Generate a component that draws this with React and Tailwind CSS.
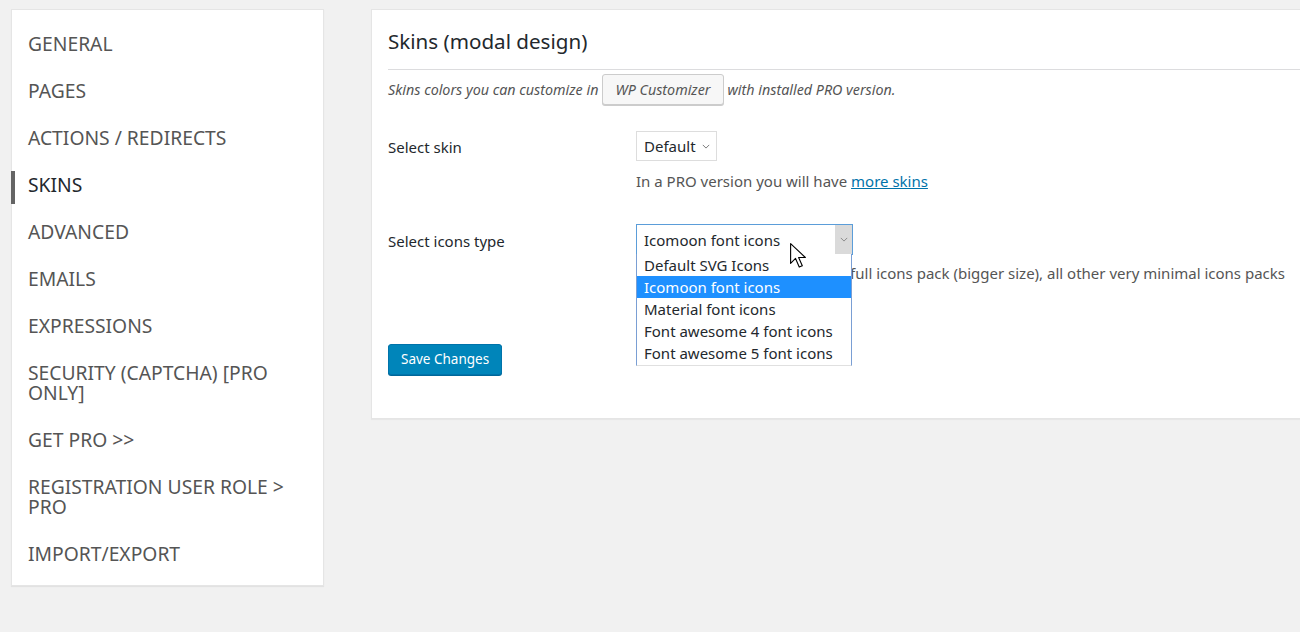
const menu = [
    'GENERAL',
    'PAGES',
    'ACTIONS / REDIRECTS',
    'SKINS',
    'ADVANCED',
    'EMAILS',
    'EXPRESSIONS',
    'SECURITY (CAPTCHA) [PRO ONLY]',
    'GET PRO >>',
    'REGISTRATION USER ROLE > PRO',
    'IMPORT/EXPORT',
]

const iconTypes = [
    'Default SVG Icons',
    'Icomoon font icons',
    'Material font icons',
    'Font awesome 4 font icons',
    'Font awesome 5 font icons',
]

const Chevron = ({ className }) => (
    <svg viewBox="0 0 10 6" className={className} fill="none" stroke="currentColor" strokeWidth="1.2">
        <path d="M1 1l4 4 4-4" />
    </svg>
)

// mouse pointer that sits over the open select in the screenshot
const Cursor = () => (
    <svg viewBox="0 0 13 21" className="absolute left-[153px] top-[18px] w-[16px] h-[26px] z-20">
        <path d="M0.5 0.5v16l4-4 3 7 2.5-1-3-6.8h5.5z" fill="#fff" stroke="#000" strokeWidth="0.9" strokeLinejoin="round" />
    </svg>
)

export default function App() {
    return (
        <div className="h-screen w-full overflow-hidden bg-[#f1f1f1] font-['Noto_Sans',sans-serif] text-[#23282d]">
            <div className="flex items-start pt-[9px] pl-[11px] gap-[47px]">
                <nav className="w-[313px] shrink-0 bg-white pt-[10px] pb-[8px] shadow-[0_1px_1px_rgba(0,0,0,0.06)] border border-[#e5e5e5]">
                    {menu.map((item) => (
                        <div key={item} className="relative pt-[14px] pb-[13px] pl-[16px] pr-[20px]">
                            {item === 'SKINS' && <span className="absolute -left-px top-[10px] h-[33px] w-[4px] bg-[#646464]" />}
                            <span className={`block text-[19.3px] leading-[20px] ${item === 'SKINS' ? 'text-[#23282d]' : 'text-[#555]'}`}>{item}</span>
                        </div>
                    ))}
                </nav>

                <main className="w-[960px] shrink-0 bg-white border border-[#e5e5e5] shadow-[0_1px_1px_rgba(0,0,0,0.04)] pt-[17px] pl-[16px] pb-[43px]">
                    <h2 className="text-[20.6px] leading-[28px] text-[#23282d]">Skins (modal design)</h2>
                    <div className="mt-[14px] border-t border-[#dcdcde]" />

                    <div className="mt-[4px] flex items-center gap-[4px] text-[14.3px] italic text-[#555]">
                        <span>Skins colors you can customize in</span>
                        <span className="h-[31px] px-[12px] flex items-center rounded-[3px] border border-[#ccc] bg-[#f7f7f7] shadow-[0_1px_0_#ccc] text-[#555]">WP Customizer</span>
                        <span>with installed PRO version.</span>
                    </div>

                    <div className="mt-[26px] flex text-[15px] leading-[20px]">
                        <div className="w-[248px] pt-[6px]">Select skin</div>
                        <div>
                            <div className="w-[81px] h-[30px] border border-[#ddd] flex items-center justify-between pl-[7px] pr-[6px]">
                                <span>Default</span>
                                <Chevron className="w-[8px] h-[5px] text-[#777]" />
                            </div>
                            <p className="mt-[10px] text-[#555]">
                                In a PRO version you will have <a className="text-[#0073aa] underline">more skins</a>
                            </p>
                        </div>
                    </div>

                    <div className="mt-[33px] flex text-[15px] leading-[20px]">
                        <div className="w-[248px] pt-[7px]">Select icons type</div>
                        <div>
                            <div className="relative w-[217px] h-[31px] border border-[#5b9dd9] flex items-stretch">
                                <span className="flex-1 pl-[7px] flex items-center">Icomoon font icons</span>
                                <span className="w-[17px] bg-[#dadada] flex items-center justify-center">
                                    <Chevron className="w-[8px] h-[5px] text-[#888]" />
                                </span>
                                <div className="absolute left-[-1px] top-full w-[216px] h-[112px] overflow-hidden border-x border-[#7a9fd4] border-b-[#e0e0e0] border-b bg-white z-10">
                                    {iconTypes.map((t) => (
                                        <div
                                            key={t}
                                            className={`h-[22px] pl-[7px] flex items-center ${t === 'Icomoon font icons' ? 'bg-[#1e90ff] text-white' : 'text-[#23282d]'}`}
                                        >
                                            {t}
                                        </div>
                                    ))}
                                </div>
                                <Cursor />
                            </div>
                            <p className="mt-[8px] text-[#555] whitespace-nowrap">
                                Icomoon font icons — it is the full icons pack (bigger size), all other very minimal icons packs
                            </p>
                        </div>
                    </div>

                    <button className="mt-[61px] h-[31px] px-[12px] rounded-[3px] bg-[#0085ba] border border-[#0073aa] shadow-[0_1px_0_#006799] text-white text-[13.5px]">
                        Save Changes
                    </button>
                </main>
            </div>
        </div>
    )
}
